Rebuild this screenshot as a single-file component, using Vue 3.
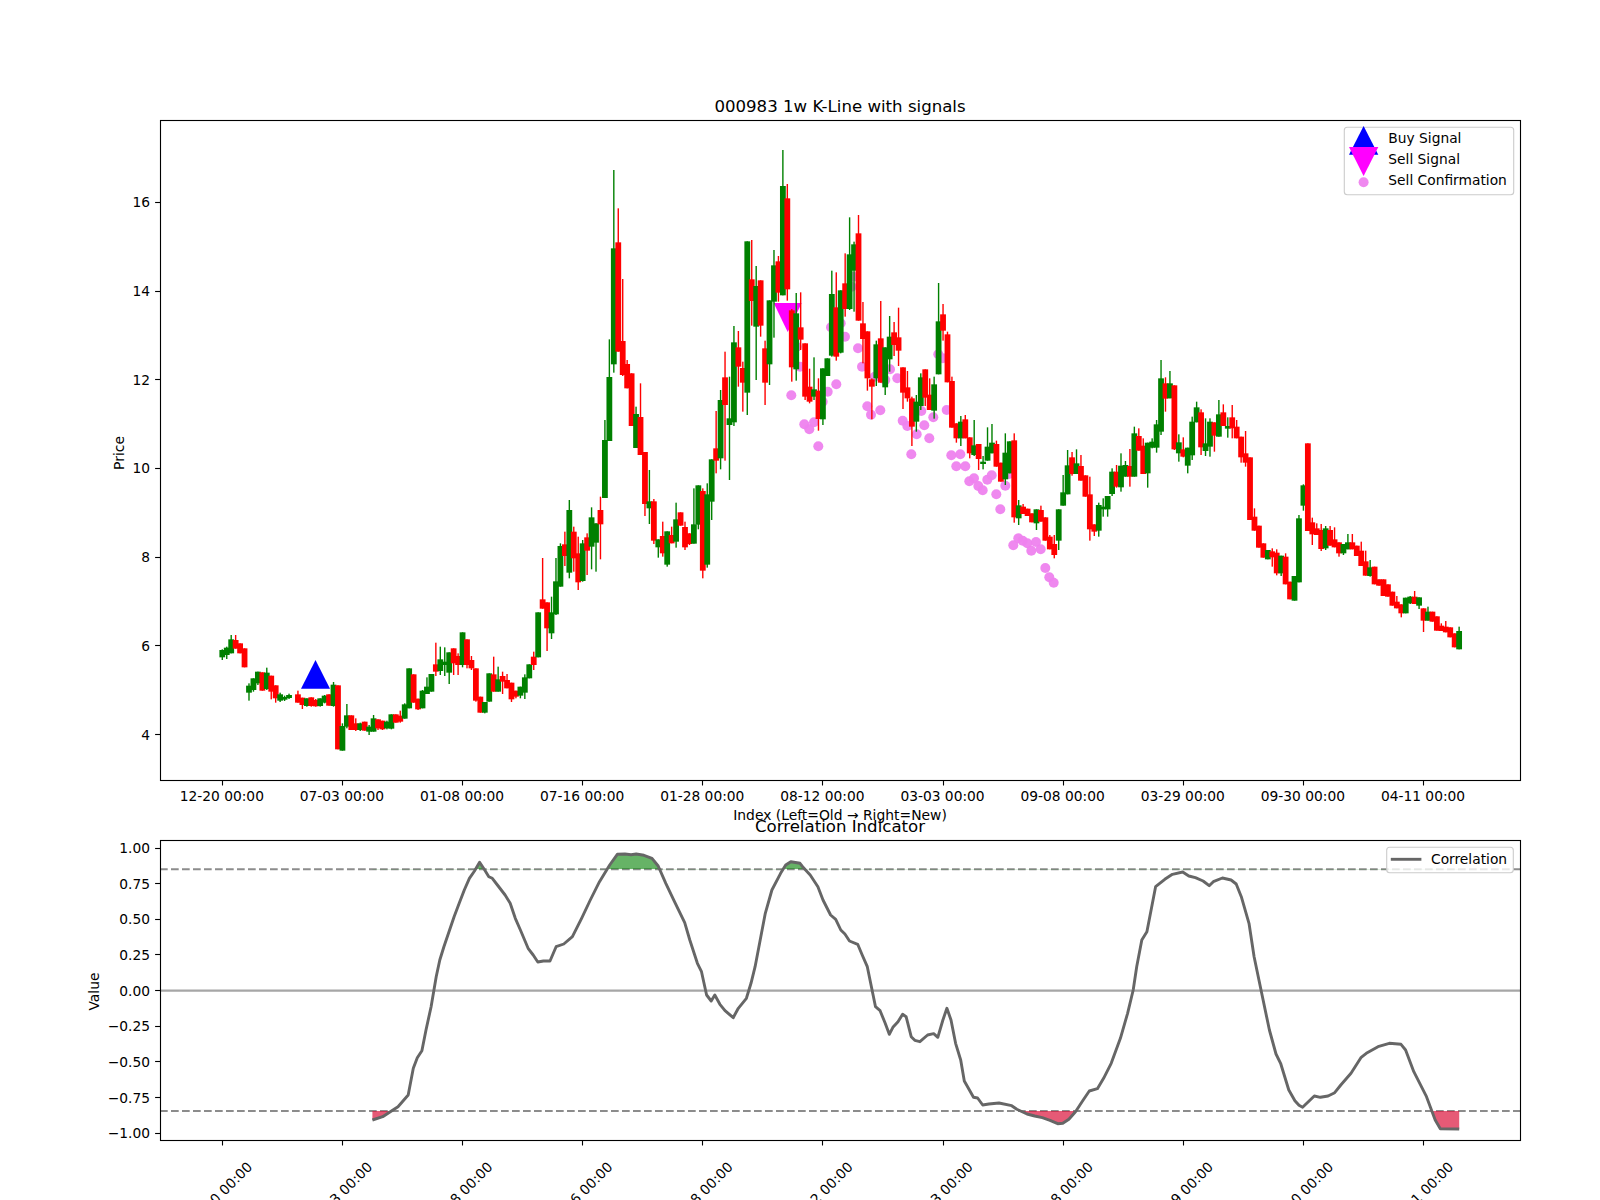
<script setup>
import { computed } from 'vue';

const X0 = 222.3;
const BAR_STEP = 4.449;
const TICK_STEP = 120.12;
const dates = ['12-20', '07-03', '01-08', '07-16', '01-28', '08-12', '03-03', '09-08', '03-29', '09-30', '04-11'];
const xTicks = dates.map((d, i) => {
  const x = X0 + i * TICK_STEP;
  return { x, tx: Math.floor(x) + 0.5, label: `${d} 00:00` };
});

const crisp = y => Math.floor(y) + 0.5;
const priceTicks = [16, 14, 12, 10, 8, 6, 4].map(p => {
  const y = 202.3 + (16 - p) * 44.35;
  return { y, ty: crisp(y), label: String(p) };
});
const valueY = v => 990.65 - 142.65 * v;
const valueTicks = [1, 0.75, 0.5, 0.25, 0, -0.25, -0.5, -0.75, -1].map(v => ({
  y: valueY(v),
  ty: crisp(valueY(v)),
  label: v.toFixed(2).replace('-', '\u2212')
}));

// each row: colour, body top, body bottom, wick top, wick bottom ("-" = no bar that week)
// values are thirds of a pixel measured from y0
const blocks = [
  { y0: 550, rows: `g 300 322 298 330,g 293 315 290 327,g 268 310 255 310,r 270 296 255 296,r 280 310 280 310,r 295 352 295 352,
    g 407 428 400 452,g 385 420 385 425,g 365 400 365 405,r 367 422 367 422,g 368 417 353 420,r 377 425 377 448,r 406 445 406 458,
    g 433 452 428 456,g 441 449 437 453,g 435 444 431 447,-,r 433 458 422 458,r 443 465 443 477,g 445 468 445 470,r 442 468 442 470,
    r 450 469 447 470,g 445 468 445 470,g 437 458 435 460,r 433 467 433 467,g 404 468 396 470,r 406 598 406 598,g 528 602 520 602,
    g 496 530 462 535,r 496 540 496 540,r 520 540 505 543,g 520 540 518 543,r 515 542 515 542,g 530 545 525 555,g 505 545 495 545,
    r 508 535 508 540,r 512 538 512 540,g 515 535 512 538,g 493 536 493 538,r 493 518 493 518,r 497 515 482 518,g 463 506 460 506,
    g 355 475 355 475,r 373 458 373 458,r 446 478 446 480,g 422 475 420 475,g 410 432 382 432,g 372 425 372 425,r 343 365 278 378,
    g 328 363 290 375,g 335 345 292 378,g 307 368 307 402,r 295 340 295 375,r 318 345 310 375,g 247 345 247 352,r 268 345 268 355,
    r 330 355 318 360,r 355 452 355 455,r 440 488 440 488,g 456 488 456 490,g 370 455 370 455,r 373 425 320 425,g 388 425 350 425,
    r 378 395 365 432,r 390 415 372 415,r 398 448 398 456,r 422 440 422 445,g 410 437 410 445,g 382 428 373 447,g 343 385 343 385,
    r 320 345 305 360,g 187 322 187 322` },
  { y0: 480, rows: `r 358 386 234 386,r 367 445 367 513,g 397 460 350 477,g 304 403 234 405,g 198 320 190 320,r 193 228 155 258,
    g 90 278 60 295,r 155 235 140 275,r 220 307 170 330,g 190 303 180 305,r 172 212 160 285,g 112 200 82 268,g 130 188 130 275,
    r 90 133 50 238` },
  { y0: 130, rows: `g 930 1104 870 1104,g 741 933 628 933,g 355 703 120 728,r 337 665 235 665,r 633 735 447 738,r 702 775 690 775,
    r 730 888 730 888,g 852 954 830 954,r 861 975 760 975,r 966 1122 966 1158` },
  { y0: 400, rows: `g 304 325 210 372,r 304 422 297 432,g 418 442 418 473,r 408 460 365 470,g 394 494 394 500,r 405 430 380 430,
    g 358 425 308 443,r 337 377 337 377,r 381 442 365 450,r 400 432 400 435,g 373 431 265 431,g 256 374 256 388,r 273 512 265 535,
    g 283 494 250 503,g 178 305 178 360` },
  { y0: 130, rows: `r 955 992 843 1030,g 810 985 780 1018,r 742 825 665 992,g 865 885 740 1050,g 637 877 588 888,r 652 710 603 770,
    r 714 758 695 845,g 334 788 334 855,r 448 513 330 587,g 468 590 408 750,r 451 587 451 620,r 655 758 632 825,g 511 703 511 765,
    g 406 515 360 623,r 394 488 378 515,g 168 496 60 496,r 205 478 162 512,r 541 712 537 755,g 550 718 489 752,r 592 629 487 660,
    r 640 800 640 810,r 770 815 716 820,g 778 800 682 810,r 782 867 745 902,g 715 868 715 885,g 685 738 685 738,g 492 677 422 680,
    r 532 680 427 692,g 481 668 481 670,r 460 537 370 560,g 373 537 262 540,g 343 422 335 545,r 310 572 255 572,r 580 627 516 700,
    r 604 745 604 782,r 748 770 745 868,g 643 745 632 768,r 625 758 513 758,g 652 772 652 795,g 620 688 558 725,r 607 645 576 678,
    r 622 662 533 708,r 712 788 712 837,r 772 805 723 815,r 805 890 800 948,g 815 875 795 905,g 742 828 730 840,r 718 803 718 828,
    r 794 840 745 840,g 763 842 740 866,g 574 733 459 733,r 553 602 522 632,r 613 757 605 757,r 753 893 740 893,r 880 925 880 938,
    g 875 925 858 948,r 868 925 855 925,r 922 970 922 985,g 946 975 870 978,r 942 987 942 1020,g 995 1002 978 1018,g 950 992 892 992,
    g 938 970 882 970,r 942 1010 932 1010` },
  { y0: 300, rows: `r 488 545 488 545,g 458 538 400 555,g 424 520 424 520,r 421 652 400 668,g 616 655 600 675,r 620 642 612 642,
    r 626 648 626 648,r 640 667 640 667,g 628 670 628 690,r 630 665 617 665,r 652 722 652 722,r 710 748 705 748,r 732 765 705 775,
    g 628 722 628 750,g 577 617 525 617,g 496 583 450 583,r 472 522 456 527,g 490 522 448 522,r 498 542 465 542,r 526 590 526 590,
    r 583 688 530 722,r 673 695 673 708,g 615 692 608 710,g 620 628 595 650,g 588 628 588 650,g 515 582 505 588,r 515 560 495 563,
    g 497 562 460 575,g 495 530 483 530,r 498 530 447 560,g 400 530 380 530,r 408 452 385 452,r 437 522 415 522,g 428 520 428 563,
    g 425 443 415 445,g 373 443 360 458,g 235 395 180 405,r 250 296 232 335,g 250 295 213 295,r 256 448 256 450,g 427 460 403 485,
    r 448 470 412 472,g 443 497 443 520,g 365 466 350 480,g 322 367 305 367` },
  { y0: 340, rows: `r 217 322 208 345,g 310 333 235 348,g 245 320 235 350,r 247 287 247 335,g 223 290 180 290,r 217 258 193 258,
    g 258 266 232 293,r 232 265 195 295,r 260 295 240 295,r 290 352 290 368,r 340 368 273 380,r 352 540 352 540,r 530 572 505 572,
    r 557 623 557 623,r 610 653 610 653,g 630 658 630 658,r 634 652 625 680,r 638 700 628 706,g 647 700 647 708,r 650 733 640 733,
    r 725 778 725 778,g 708 782 708 782,g 535 727 525 727,g 436 497 433 512,r 310 573 310 573,r 547 583 533 615,r 565 585 550 585,
    r 570 627 552 633,g 565 625 558 630,r 570 617 558 617,r 598 622 562 622,r 607 640 607 650,g 612 640 612 645,g 607 628 582 628,
    r 607 628 582 628,r 617 648 617 648,r 632 678 605 678,r 664 707 632 707,g 682 708 660 710,r 680 733 680 733,r 718 737 718 737,
    r 718 768 718 768,r 733 770 733 770,r 755 797 755 797,r 785 805 768 805,r 793 820 793 832,g 773 820 773 820,g 770 790 768 792,
    r 770 792 753 792,g 772 797 772 807,r 805 842 805 876,g 815 842 800 842,r 815 845 815 845,r 829 872 829 872,r 857 873 850 873,
    r 860 877 843 877,r 862 892 862 892,r 880 922 880 922,g 873 928 860 928` }
];

const candles = computed(() => {
  const out = [];
  let i = 0;
  for (const block of blocks) {
    for (const row of block.rows.split(',')) {
      const parts = row.trim().split(' ');
      if (parts[0] !== '-') {
        const [top, bottom, wickTop, wickBottom] = parts.slice(1).map(v => block.y0 + Number(v) / 3);
        out.push({ id: i, x: X0 + i * BAR_STEP, color: parts[0] === 'g' ? '#008000' : '#ff0000', top, bottom, wickTop, wickBottom });
      }
      i++;
    }
  }
  return out;
});

const sellDots = [
  [791.3, 395.3], [818.3, 446.3], [804.3, 424.3], [809.3, 429.3], [814, 422.3], [822.7, 401.7], [827.7, 391.7], [836.3, 384.3],
  [831, 327.3], [840.7, 323.3], [845, 336.7], [858, 348.3], [862, 366.7], [853.3, 276.7], [851.7, 286.7], [867.3, 406.3],
  [871, 414.7], [880.3, 410.3], [874.7, 376.7], [885.3, 380], [890, 369.3], [897.3, 378.3], [800, 366.7], [796.7, 346.7],
  [902.7, 420.7], [907.3, 426], [911.3, 454.3], [916.7, 434.3], [921.3, 411], [924.3, 425.3], [929.3, 438.3], [933.3, 417.3],
  [938.3, 354.3], [942.7, 358.3], [946.7, 410], [951.3, 455.3], [960.3, 454.3], [956.3, 466.3], [965.3, 466.3], [969.3, 481.3],
  [974, 478.3], [978.3, 486], [982.7, 490.3], [987.3, 479.7], [991.7, 475.3], [996.3, 494.3], [1000.3, 509.3], [1005.3, 485.7],
  [1009, 474], [1013.3, 545.3], [1018.3, 538.3], [1022.7, 540.7], [1027.3, 543.3], [1031.3, 550.7], [1036, 542], [1040.7, 549.3],
  [1045.3, 568], [1049.3, 577.3], [1053.7, 582.7]
];

const corr = [
  [372.4, 1120], [382.7, 1116.7], [390.3, 1111.7], [398, 1106.7], [408.2, 1095], [413.3, 1068.3], [417.3, 1057.7], [421.9, 1050.7],
  [426, 1030], [431.1, 1006.7], [436.2, 976.7], [439.8, 960], [443.9, 946.7], [449, 931.7], [454.1, 916.7], [459.2, 903.3],
  [464.3, 890], [469.4, 878.3], [474.5, 871], [479.6, 862.3], [484.7, 870], [488.8, 876.7], [492.3, 878.3], [497.4, 885],
  [505.1, 895], [510.2, 903.3], [515.3, 918.3], [520.4, 930], [528.1, 948.3], [533.2, 955], [537.8, 962], [543.4, 961],
  [550, 961], [556.1, 946.7], [563.8, 944], [572.4, 936.7], [581.6, 918.3], [590.3, 900], [599.5, 881.7], [609.7, 865],
  [617.3, 854.3], [625, 854], [631.1, 854.7], [636.2, 854], [643.9, 855.3], [652, 858.3], [658.2, 866], [665.8, 883.3],
  [674.5, 901.7], [684.7, 922.7], [689.8, 940], [697.4, 963.3], [701.5, 971.7], [706.6, 995], [711.2, 1001], [714.8, 995],
  [719.9, 1004.3], [725, 1010.7], [733.2, 1017.7], [738.3, 1008.3], [746.4, 998.3], [751, 983.3], [755.1, 966.7], [760.2, 940],
  [765.3, 913.3], [771.9, 890], [780.6, 873.3], [785.7, 865], [790.8, 861.7], [800, 863.3], [802.6, 866.7], [810.2, 875],
  [817.9, 886.7], [823, 900], [830.6, 915], [835.7, 919.3], [840.8, 930], [844.9, 934], [849.5, 941], [857.7, 944.3],
  [862.2, 955], [867.3, 966.7], [871.4, 986.7], [875.5, 1006.7], [880.1, 1010.7], [885.2, 1023.3], [889.3, 1034.3], [892.9, 1027.3],
  [898, 1021.7], [902.6, 1014.3], [906.1, 1016.7], [911.2, 1036.7], [914.8, 1040.3], [919.9, 1041.7], [927.6, 1035], [933.7, 1033.7],
  [937.8, 1037.3], [942.9, 1020], [946.9, 1008.3], [951, 1020], [955.6, 1043.3], [960.7, 1060], [964.3, 1081], [969.4, 1090],
  [973.5, 1097.3], [977.6, 1098], [982.7, 1105], [988.8, 1104], [999, 1103], [1011.7, 1105.7], [1016.8, 1109.3], [1027, 1114],
  [1034.7, 1116], [1042.3, 1117.7], [1050, 1120.3], [1057.7, 1123.7], [1062.8, 1123.3], [1068.9, 1119.3], [1075.5, 1111.7], [1083.2, 1100],
  [1089.3, 1091], [1097.4, 1088.7], [1103.6, 1078.3], [1111.2, 1063.3], [1120.4, 1038.3], [1127.6, 1013.3], [1133.2, 990], [1136.7, 966.7],
  [1141.8, 940], [1146.9, 931.7], [1155.6, 886.7], [1164.8, 879.3], [1172.4, 874.3], [1182.7, 872], [1188.8, 876], [1195.4, 877.7],
  [1203.1, 881], [1209.2, 885.7], [1213.3, 881.7], [1222.4, 878], [1231.1, 880], [1236.2, 884], [1241.3, 896.7], [1249, 923.3],
  [1254.1, 956.7], [1261.7, 993.3], [1269.4, 1030], [1276, 1054], [1280.6, 1063.3], [1288.8, 1090], [1294.9, 1100.7], [1299, 1105.3],
  [1302.6, 1107.3], [1314.3, 1096], [1320.4, 1097.3], [1328.1, 1096], [1334.7, 1092.7], [1340.8, 1085], [1351, 1073.3], [1361.2, 1057.3],
  [1366.3, 1053.3], [1378, 1046.7], [1389.3, 1043.3], [1401, 1044.3], [1405.6, 1050], [1413.8, 1071.7], [1426.5, 1096.7], [1435.2, 1120],
  [1440.3, 1128.7], [1459.2, 1129]
];

const HIGH_Y = 869.3;
const LOW_Y = 1111;
const corrLine = corr.map(p => p.join(',')).join(' ');
const firstX = corr[0][0];
const lastX = corr[corr.length - 1][0];
const highFill = `${corrLine} ${lastX},${HIGH_Y} ${firstX},${HIGH_Y}`;
const lowFill = `${corrLine} ${lastX},${LOW_Y} ${firstX},${LOW_Y}`;
</script>

<template>
  <div class="figure">
    <svg class="chart" width="1600" height="1200" viewBox="0 0 1600 1200">
      <defs>
        <clipPath id="aboveHigh"><rect x="160" y="840" width="1360" :height="HIGH_Y - 840" /></clipPath>
        <clipPath id="belowLow"><rect x="160" :y="LOW_Y" width="1360" :height="1140 - LOW_Y" /></clipPath>
      </defs>

      <!-- price panel -->
      <text class="title" x="840" y="112">000983 1w K-Line with signals</text>
      <polygon points="301,688.7 330,688.7 315.5,660" fill="#0000ff" />
      <polygon points="773.7,303 801.7,303 787.7,332" fill="#ff00ff" />
      <circle v-for="(d, i) in sellDots" :key="i" :cx="d[0]" :cy="d[1]" r="5" class="sell-dot" />
      <g v-for="c in candles" :key="c.id">
        <rect :x="c.x - 0.7" :y="c.wickTop" width="1.4" :height="c.wickBottom - c.wickTop" :fill="c.color" />
        <rect :x="c.x - 2.9" :y="c.top" width="5.8" :height="c.bottom - c.top" :fill="c.color" />
      </g>
      <rect x="160.5" y="120.5" width="1360" height="660" class="spine" />
      <g v-for="t in priceTicks" :key="t.label">
        <line x1="155.1" x2="160" :y1="t.ty" :y2="t.ty" class="tick" />
        <text class="tick-label right" x="150" :y="t.y + 5">{{ t.label }}</text>
      </g>
      <g v-for="t in xTicks" :key="t.label">
        <line :x1="t.tx" :x2="t.tx" y1="781" y2="785.5" class="tick" />
        <text class="tick-label middle" :x="t.x - 0.5" y="801">{{ t.label }}</text>
      </g>
      <text class="axis-label" transform="translate(124 453) rotate(-90)">Price</text>
      <text class="axis-label" x="840" y="820">Index (Left=Old → Right=New)</text>

      <rect x="1344.3" y="127.3" width="169.4" height="67.4" rx="3" class="legend-box" />
      <polygon points="1349,154.7 1378.3,154.7 1363.6,126" fill="#0000ff" />
      <polygon points="1349,147 1378.3,147 1363.6,176" fill="#ff00ff" />
      <circle cx="1363.6" cy="182.3" r="5" class="sell-dot" />
      <text class="tick-label" x="1388.3" y="143.3">Buy Signal</text>
      <text class="tick-label" x="1388.3" y="164.3">Sell Signal</text>
      <text class="tick-label" x="1388.3" y="185.2">Sell Confirmation</text>

      <!-- correlation panel -->
      <text class="title" x="840" y="832">Correlation Indicator</text>
      <line x1="160" x2="1520" :y1="HIGH_Y" :y2="HIGH_Y" class="band" />
      <line x1="160" x2="1520" :y1="LOW_Y" :y2="LOW_Y" class="band" />
      <line x1="160" x2="1520" :y1="valueY(0)" :y2="valueY(0)" class="zero" />
      <polygon :points="highFill" clip-path="url(#aboveHigh)" class="fill-high" />
      <polygon :points="lowFill" clip-path="url(#belowLow)" class="fill-low" />
      <polyline :points="corrLine" class="corr-line" />
      <rect x="160.5" y="840.5" width="1360" height="300" class="spine" />
      <g v-for="t in valueTicks" :key="t.label">
        <line x1="155.1" x2="160" :y1="t.ty" :y2="t.ty" class="tick" />
        <text class="tick-label right" x="150" :y="t.y + 5">{{ t.label }}</text>
      </g>
      <g v-for="t in xTicks" :key="t.label">
        <line :x1="t.tx" :x2="t.tx" y1="1141" y2="1145.5" class="tick" />
        <text class="tick-label middle" :transform="`rotate(-45 ${t.x - 2.5} 1194)`" :x="t.x - 2.5" y="1199">{{ t.label }}</text>
      </g>
      <text class="axis-label" transform="translate(99 991.5) rotate(-90)">Value</text>

      <rect x="1386.7" y="847.3" width="126.6" height="25.4" rx="3" class="legend-box" />
      <line x1="1390.8" x2="1421.4" y1="859.3" y2="859.3" class="corr-line" />
      <text class="tick-label" x="1431" y="864">Correlation</text>
    </svg>
  </div>
</template>

<style scoped>
.figure {
  width: 1600px;
  height: 1200px;
  background: #fff;
  overflow: hidden;
}

.chart {
  display: block;
}

.title {
  font-family: "DejaVu Sans", sans-serif;
  font-size: 16.6px;
  text-anchor: middle;
  fill: #000;
}

.tick-label {
  font-family: "DejaVu Sans", sans-serif;
  font-size: 13.8px;
  fill: #000;
}

.right {
  text-anchor: end;
}

.middle {
  text-anchor: middle;
}

.axis-label {
  font-family: "DejaVu Sans", sans-serif;
  font-size: 13.89px;
  text-anchor: middle;
  fill: #000;
}

.spine {
  fill: none;
  stroke: #000;
  stroke-width: 1.11;
}

.tick {
  stroke: #000;
  stroke-width: 1.11;
}

.sell-dot {
  fill: #ee82ee;
  opacity: 0.95;
}

.legend-box {
  fill: #fff;
  fill-opacity: 0.8;
  stroke: #ccc;
  stroke-width: 1.11;
}

.band {
  stroke: #8c8c8c;
  stroke-width: 2.08;
  stroke-dasharray: 7.7 3.3;
}

.zero {
  stroke: #a6a6a6;
  stroke-width: 2.08;
}

.fill-high {
  fill: #008000;
  fill-opacity: 0.6;
}

.fill-low {
  fill: #dc143c;
  fill-opacity: 0.7;
}

.corr-line {
  fill: none;
  stroke: #666;
  stroke-width: 2.9;
  stroke-linejoin: round;
}
</style>

<style>
body {
  margin: 0;
  background: #fff;
}
</style>
